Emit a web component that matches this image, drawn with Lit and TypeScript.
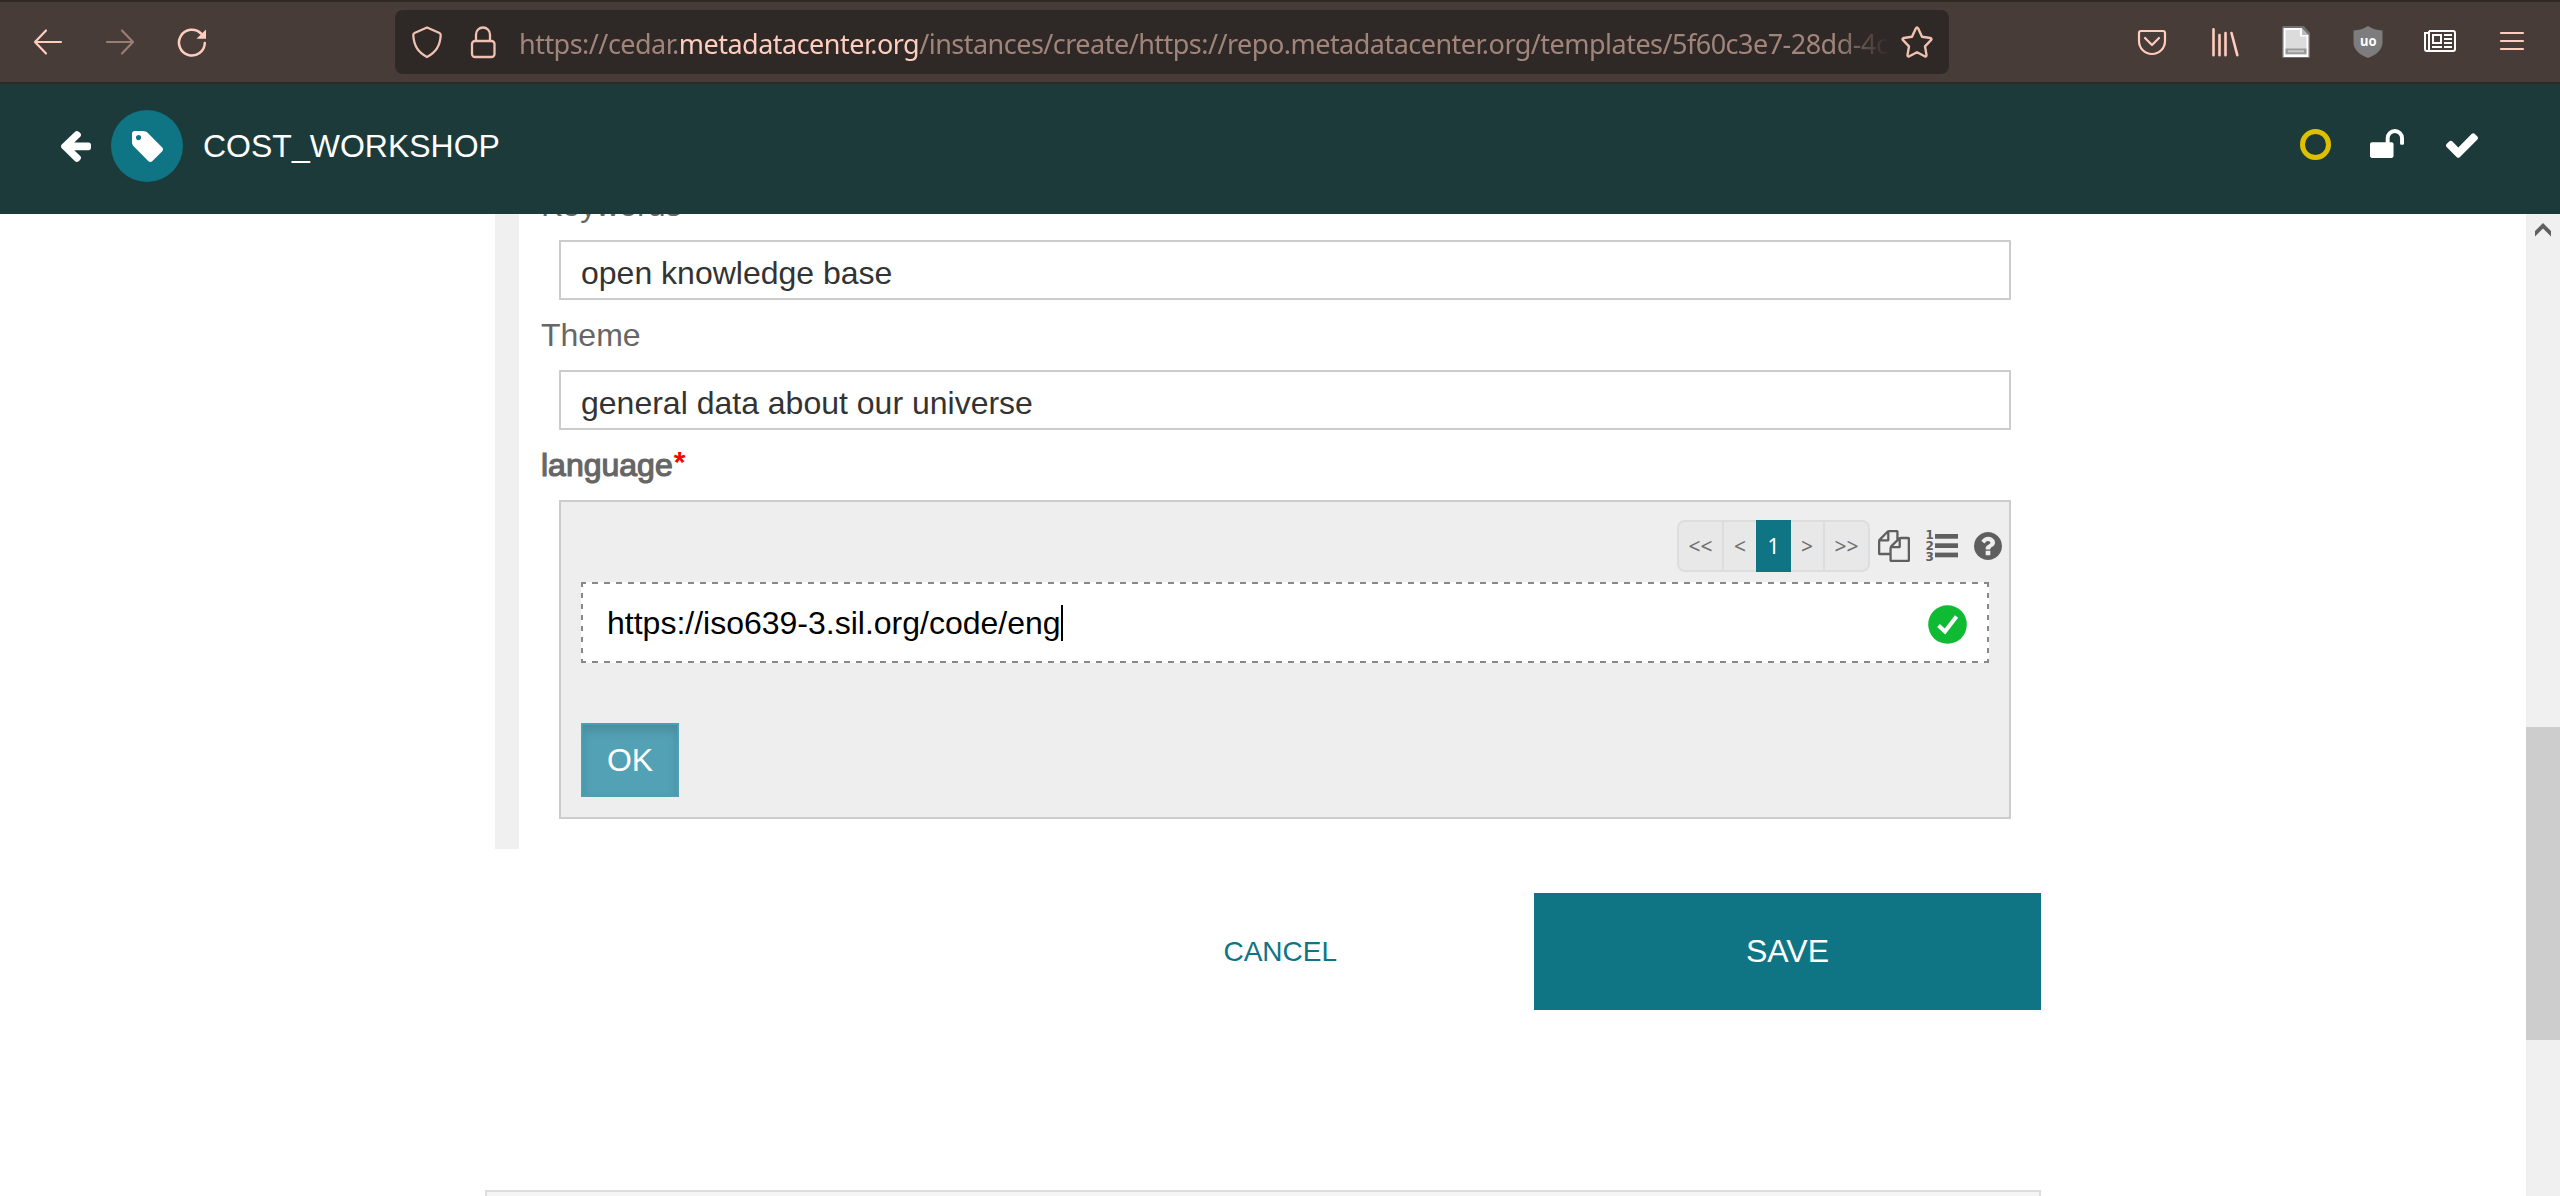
import { LitElement, html, css, svg } from "lit";
import { customElement } from "lit/decorators.js";

const ARROW_LEFT = "M1536 896v128q0 53-32.5 90.5t-84.5 37.5h-704l293 294q38 36 38 90t-38 90l-75 76q-37 37-90 37-52 0-91-37l-651-652q-37-37-37-90 0-52 37-91l651-650q38-38 91-38 52 0 90 38l75 74q38 38 38 91t-38 91l-293 293h704q52 0 84.5 37.5t32.5 90.5z";
const TAG = "M576 448q0-53-37.5-90.5t-90.5-37.5-90.5 37.5-37.5 90.5 37.5 90.5 90.5 37.5 90.5-37.5 37.5-90.5zm1067 576q0 53-37 90l-491 492q-39 37-91 37-53 0-90-37l-715-716q-38-37-64.5-101t-26.5-117v-416q0-52 38-90t90-38h416q53 0 117 26.5t102 64.5l715 714q37 39 37 91z";
const UNLOCK = "M1728 576v256q0 26-19 45t-45 19h-64q-26 0-45-19t-19-45v-256q0-106-75-181t-181-75-181 75-75 181v192h96q40 0 68 28t28 68v576q0 40-28 68t-68 28h-960q-40 0-68-28t-28-68v-576q0-40 28-68t68-28h672v-192q0-185 131.5-316.5t316.5-131.5 316.5 131.5 131.5 316.5z";
const CHECK = "M1671 566q0 40-28 68l-724 724-136 136q-28 28-68 28t-68-28l-136-136-362-362q-28-28-28-68t28-68l136-136q28-28 68-28t68 28l294 295 656-657q28-28 68-28t68 28l136 136q28 28 28 68z";
const COPY = "M1696 384q40 0 68 28t28 68v1216q0 40-28 68t-68 28h-960q-40 0-68-28t-28-68v-288h-544q-40 0-68-28t-28-68v-672q0-40 20-88t48-76l408-408q28-28 76-48t88-20h416q40 0 68 28t28 68v328q68-40 128-40h416zm-544 213l-299 299h299v-299zm-640-384l-299 299h299v-299zm196 647l316-316v-416h-384v416q0 40-28 68t-68 28h-416v640h512v-256q0-40 20-88t48-76zm956 804v-1152h-384v416q0 40-28 68t-68 28h-416v640h896z";
const HELP = "M1024 1376v-192q0-14-9-23t-23-9h-192q-14 0-23 9t-9 23v192q0 14 9 23t23 9h192q14 0 23-9t9-23zm256-672q0-88-55.5-163t-138.5-116-170-41q-243 0-371 213-15 24 8 42l132 100q7 6 19 6 16 0 25-12 53-68 86-92 34-24 86-24 48 0 85.5 26t37.5 59q0 38-20 61t-68 45q-63 28-115.5 86.5t-52.5 125.5v36q0 14 9 23t23 9h192q14 0 23-9t9-23q0-19 21.5-49.5t54.5-49.5q32-18 49-28.5t46-35 44.5-48 28-60.5 12.5-81zm384 192q0 209-103 385.5t-279.5 279.5-385.5 103-385.5-103-279.5-279.5-103-385.5 103-385.5 279.5-279.5 385.5-103 385.5 103 279.5 279.5 103 385.5z";

@customElement("browser-bar")
export class BrowserBar extends LitElement {
  static styles = css`
    :host { display: block; }
    .bar {
      box-sizing: border-box; height: 84px; display: flex; align-items: center;
      background: #473c38; border-top: 2px solid #2f2825; border-bottom: 2px solid #2f2825;
      padding: 0 32px; color: #ffcdbe;
    }
    svg { display: block; flex: none; overflow: visible; }
    .nav { display: flex; gap: 40px; width: 363px; align-items: center; }
    .dim { opacity: 0.45; }
    .address {
      box-sizing: border-box; width: 1554px; height: 64px; border-radius: 8px; background: #2e2826;
      display: flex; align-items: center; padding: 0 16px 0 16px; color: #f0c0b0;
    }
    .lock { margin-left: 26px; }
    .url {
      flex: 1; margin: 4px 10px 0 22px; white-space: nowrap; overflow: hidden;
      font: 27px/40px "Noto Sans", "Open Sans", sans-serif; letter-spacing: -0.52px; color: #a1857b;
      -webkit-mask-image: linear-gradient(to right, #000 calc(100% - 56px), transparent calc(100% - 2px));
      mask-image: linear-gradient(to right, #000 calc(100% - 56px), transparent calc(100% - 2px));
    }
    .domain { color: #ffcdbe; }
    .tools { display: flex; gap: 40px; margin-left: auto; align-items: center; }
    .logo { font: bold 15px "Noto Sans", sans-serif; }
  `;
  render() {
    return html`
      <div class="bar">
        <div class="nav">
          <svg width="32" height="32" viewBox="0 0 32 32" fill="none" stroke="currentColor" stroke-width="2.2" stroke-linecap="round" stroke-linejoin="round"><path d="M29 16H3M14 4.500L3 16l11 11.500"/></svg>
          <svg class="dim" width="32" height="32" viewBox="0 0 32 32" fill="none" stroke="currentColor" stroke-width="2.200" stroke-linecap="round" stroke-linejoin="round"><path d="M3 16h26M18 4.500L29 16 18 27.500"/></svg>
          <svg width="32" height="32" viewBox="0 0 32 32" fill="none" stroke="currentColor" stroke-width="2.500" stroke-linecap="round"><path d="M28.800 17A12.900 12.900 0 1 1 25 7.500"/><path d="M30 3.500v9.300h-9.500z" fill="currentColor" stroke="none"/></svg>
        </div>
        <div class="address">
          <svg width="32" height="32" viewBox="0 0 32 32" fill="none" stroke="currentColor" stroke-width="2.300" stroke-linejoin="round"><path d="M16 1.500L28.500 7c1 .500 1.300 1.500 1.200 2.500C29 20 25 26 16 31 7 26 3 20 2.300 9.500 2.200 8.500 2.500 7.500 3.500 7z"/></svg>
          <svg class="lock" width="28" height="32" viewBox="0 0 28 32" fill="none" stroke="currentColor" stroke-width="2.300"><rect x="3" y="15" width="22.500" height="16" rx="3"/><path d="M7 15V8.500a7 7 0 0 1 14 0V15"/></svg>
          <div class="url">https://cedar.<span class="domain">metadatacenter.org</span>/instances/create/https://repo.metadatacenter.org/templates/5f60c3e7-28dd-4c</div>
          <svg width="32" height="32" viewBox="0 0 32 32" fill="none" stroke="currentColor" stroke-width="2.400" stroke-linejoin="round"><path d="M14.800 2.500q1.200-2 2.400 0l3.800 8.300 8.300 1.200q2 .600.700 2.200l-6 6.200 1.500 8.500q.100 2-1.800 1.400L16 26.200l-7.700 4.100q-1.900.600-1.800-1.400L8 20.400l-6-6.200q-1.300-1.600.7-2.200l8.300-1.200z"/></svg>
        </div>
        <div class="tools">
          <svg width="32" height="32" viewBox="0 0 32 32" fill="none" stroke="currentColor" stroke-width="2.200" stroke-linecap="round" stroke-linejoin="round"><path d="M5 5h22q2 0 2 2v8a13 13 0 0 1-26 0V7q0-2 2-2z"/><path d="M9 12l7 7 7-7"/></svg>
          <svg width="32" height="32" viewBox="0 0 32 32" fill="none" stroke="currentColor" stroke-width="2.600" stroke-linecap="round"><path d="M5.500 3.200v26M11.500 9v20.200M17.500 7v22.200M23.500 7l5.800 22.200"/></svg>
          <svg width="32" height="32" viewBox="0 0 32 32"><path d="M4 0h20l6 7v23.500q0 1.500-1.500 1.500h-25q-1.500 0-1.500-1.500v-29q0-1.500 2-1.500z" fill="#707070"/><path d="M4.500 3h16.500v6.500h6.500v20.500h-23z" fill="#dcdcdc" stroke="#fff" stroke-width="2"/><path d="M22 2v6h5.500z" fill="#bbb"/><path d="M5.500 22.500h21v5.500h-21z" fill="#999"/><path d="M8 25.300h16" stroke="#c9c9c9" stroke-width="2"/></svg>
          <svg width="32" height="32" viewBox="0 0 32 32"><path d="M16 0Q22 4 30.500 4.500V16q0 10.500-14.500 16Q1.500 26.500 1.500 16V4.500Q10 4 16 0z" fill="#7d7d7d"/><text class="logo" x="8" y="19.500" fill="#fff" textLength="16.500" lengthAdjust="spacingAndGlyphs">uo</text></svg>
          <svg width="32" height="32" viewBox="0 0 32 32" fill="none" stroke="#fff" stroke-width="2"><path d="M5 5h24q2 0 2 2v16q0 2-2 2H3q-2 0-2-2V7h4M5 5v20"/><path d="M9 9h8v8H9zM8 21h10M20 9h8M20 13h8M20 17h8M20 21h8"/></svg>
          <svg width="32" height="32" viewBox="0 0 32 32" stroke="currentColor" stroke-width="2.200" stroke-linecap="round"><path d="M5 7h22M5 15h22M5 23h22"/></svg>
        </div>
      </div>`;
  }
}

@customElement("app-root")
export class AppRoot extends LitElement {
  static styles = css`
    :host {
      display: flex; flex-direction: column; height: 1196px; overflow: hidden; background: #fff;
      font: 32px/36px "Liberation Sans", Arial, sans-serif; color: #333;
    }
    svg { display: block; flex: none; overflow: visible; }
    .header {
      box-sizing: border-box; flex: none; height: 130px; background: #1b3a39; color: #fff;
      display: flex; align-items: center; padding: 0 82px 6px 61px;
    }
    .back { margin-top: 2px; }
    .avatar {
      width: 72px; height: 72px; margin-left: 20px; border-radius: 50%; background: #0f7584;
      display: flex; align-items: center; justify-content: center;
    }
    .title { margin-left: 20px; }
    .status { display: flex; align-items: center; margin-left: auto; }
    .ring { box-sizing: border-box; width: 31px; height: 31px; border: 5px solid #dfc000; border-radius: 50%; margin: -3px 39px 0 0; }
    .unlock { margin-right: 42px; margin-top: -5px; }
    .tick { margin-top: -1px; }
    .main { flex: 1; min-height: 0; display: flex; justify-content: space-between; overflow: hidden; }
    .content { width: 1556px; margin-left: 485px; }
    .section { box-sizing: border-box; margin: -27px 0 0 10px; border-left: 24px solid #f0f0f0; padding: 0 30px 30px 22px; }
    .field { display: flex; flex-direction: column; gap: 17px; margin-bottom: 17px; }
    .field.last { margin-bottom: 0; }
    .label { display: flex; color: #666; }
    .strong { -webkit-text-stroke: 1.2px #666; }
    .star { margin-left: 1px; color: #f00; font-size: 30px; line-height: 30px; font-weight: bold; }
    .input { box-sizing: border-box; height: 60px; margin-left: 18px; border: 2px solid #ccc; padding: 13px 20px 0; }
    .panel { box-sizing: border-box; height: 319px; margin-left: 18px; border: 2px solid #ccc; background: #eee; padding: 18px 7px 0 20px; }
    .controls { display: flex; justify-content: flex-end; align-items: center; height: 52px; color: #5f5f5f; }
    .pager {
      box-sizing: border-box; height: 52px; width: 193px; display: flex; border: 2px solid #ddd; border-radius: 8px;
      background: #e8e8e8; color: #6f6f6f; font: 21px/48px "Noto Sans", "Open Sans", sans-serif; text-align: center; margin-right: 8px;
    }
    .pager span { box-sizing: border-box; }
    .first { width: 45px; border-right: 2px solid #ddd; }
    .prev { width: 32px; }
    .active { width: 35px; margin: -2px 0; line-height: 52px; background: #0f7584; color: #fff; }
    .next { width: 34px; border-right: 2px solid #ddd; }
    .last-page { width: 43px; }
    .digit { font: bold 12px "DejaVu Sans", sans-serif; }
    .list { margin: 0 16px; }
    .uri {
      box-sizing: border-box; width: 1408px; height: 81px; margin-top: 10px; padding: 0 22px 0 26px;
      display: flex; align-items: center; color: #000;
      background:
        repeating-linear-gradient(to right, #888 0 5px, #fff 5px 11px, #888 11px 12px) top / 100% 2px no-repeat,
        repeating-linear-gradient(to right, #888 0 5px, #fff 5px 11px, #888 11px 12px) bottom / 100% 2px no-repeat,
        repeating-linear-gradient(to bottom, #888 0 5px, #fff 5px 11px) left / 2px 100% no-repeat,
        repeating-linear-gradient(to bottom, #888 0 5px, #fff 5px 11px) right / 2px 100% no-repeat,
        #fff;
    }
    .caret { width: 2px; height: 36px; background: #000; }
    .ok-icon { margin-left: auto; margin-top: 4px; }
    .ok {
      box-sizing: border-box; width: 98px; height: 74px; margin-top: 60px; background: #53a1b5; color: #fff;
      border: 2px solid #4d9fb2; box-shadow: inset 0 6px 10px rgba(0, 0, 0, 0.125);
      display: flex; align-items: center; justify-content: center;
    }
    .actions { display: flex; justify-content: flex-end; height: 117px; margin-top: 44px; align-items: center; }
    .cancel { font-size: 28px; color: #0f7584; margin-right: 197px; }
    .save { width: 507px; height: 117px; line-height: 117px; background: #0f7584; color: #fff; text-align: center; }
    .footer { box-sizing: border-box; height: 40px; margin-top: 180px; border: 2px solid #ddd; border-width: 2px 2px 0; background: #f5f5f5; }
    .scroll { width: 34px; background: #f0f0f0; display: flex; flex-direction: column; align-items: center; padding-top: 9px; }
    .thumb { width: 34px; height: 313px; margin-top: 490px; background: #cdcdcd; }
  `;
  render() {
    return html`
      <browser-bar></browser-bar>
      <div class="header">
        <svg class="back" width="30" height="32" viewBox="64 187 1472 1607" preserveAspectRatio="none" fill="#fff"><path d=${ARROW_LEFT}/></svg>
        <div class="avatar"><svg width="31" height="31" viewBox="128 128 1515 1515" fill="#fff"><path d=${TAG}/></svg></div>
        <div class="title">COST_WORKSHOP</div>
        <div class="status">
          <div class="ring"></div>
          <svg class="unlock" width="34" height="29" viewBox="64 128 1664 1408" fill="#fff"><path d=${UNLOCK}/></svg>
          <svg class="tick" width="32" height="25" viewBox="121 334 1550 1188" fill="#fff"><path d=${CHECK}/></svg>
        </div>
      </div>
      <div class="main">
        <div class="content">
          <div class="section">
            <div class="field"><div class="label">Keywords</div><div class="input">open knowledge base</div></div>
            <div class="field"><div class="label">Theme</div><div class="input">general data about our universe</div></div>
            <div class="field last">
              <div class="label"><span class="strong">language</span><span class="star">*</span></div>
              <div class="panel">
                <div class="controls">
                  <div class="pager"><span class="first">&lt;&lt;</span><span class="prev">&lt;</span><span class="active">1</span><span class="next">&gt;</span><span class="last-page">&gt;&gt;</span></div>
                  <svg width="32" height="32" viewBox="0 0 1792 1792" fill="currentColor"><path d=${COPY}/></svg>
                  <svg class="list" width="32" height="32" viewBox="0 0 32 32" fill="currentColor">
                    ${["1", "2", "3"].map((d, i) => svg`<text class="digit" x="-0.5" y=${9 + i * 11}>${d}</text><rect x="9" y=${4 + i * 9.300} width="23" height="4.700"/>`)}
                  </svg>
                  <svg width="28" height="28" viewBox="128 128 1536 1536" fill="currentColor"><path d=${HELP}/></svg>
                </div>
                <div class="uri">
                  <span>https://iso639-3.sil.org/code/eng</span><div class="caret"></div>
                  <svg class="ok-icon" width="39" height="39" viewBox="0 0 39 39"><circle cx="19.500" cy="19.500" r="19.300" fill="#0ebb33"/><path d="M10.500 20.500l6.500 6L28.500 11.500" fill="none" stroke="#fff" stroke-width="4"/></svg>
                </div>
                <div class="ok">OK</div>
              </div>
            </div>
          </div>
          <div class="actions"><div class="cancel">CANCEL</div><div class="save">SAVE</div></div>
          <div class="footer"></div>
        </div>
        <div class="scroll">
          <svg width="16" height="14" viewBox="0 0 16 14" fill="#606060"><path d="M8 0l8 8v5.500l-8-8-8 8V8z"/></svg>
          <div class="thumb"></div>
        </div>
      </div>`;
  }
}
